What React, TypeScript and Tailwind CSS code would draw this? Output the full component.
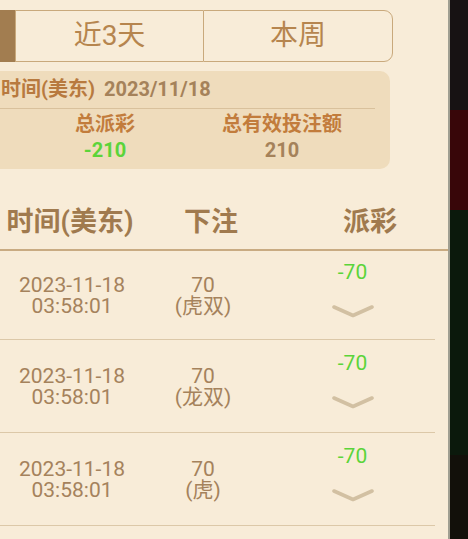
const rows = [
  { date: '2023-11-18', time: '03:58:01', bet: '70', pick: '(虎双)', payout: '-70', h: 'h-[89px]' },
  { date: '2023-11-18', time: '03:58:01', bet: '70', pick: '(龙双)', payout: '-70', h: 'h-[93px]' },
  { date: '2023-11-18', time: '03:58:01', bet: '70', pick: '(虎)', payout: '-70', h: 'h-[93px]' },
];

function Chevron() {
  return (
    <svg width="44" height="16" viewBox="0 0 44 16" className="blur-[0.4px]">
      <polyline points="3,4 22,12.5 41,4" fill="none" stroke="#d2c0a2" strokeWidth="3.6" strokeLinecap="round" strokeLinejoin="round" />
    </svg>
  );
}

export default function App() {
  return (
    <div
      className="flex h-[539px] w-[468px] overflow-hidden"
      style={{ fontFamily: 'Roboto, "Noto Sans CJK SC", sans-serif' }}
    >
      <div className="flex w-[448px] shrink-0 flex-col bg-[#f8ecd8]">
        {/* tabs */}
        <div className="mt-[10px] flex h-[52px] w-[393px]">
          <div className="w-[15px] bg-[#a27d50]" />
          <div className="flex w-[188px] items-center justify-center border-y-[1.5px] border-l-[1.5px] border-[#c9a97c] text-[28px] text-[#b6854e]">
            近3天
          </div>
          <div className="flex flex-1 items-center justify-center rounded-r-[9px] border-[1.5px] border-[#c9a97c] text-[28px] text-[#b6854e]">
            本周
          </div>
        </div>

        {/* summary */}
        <div className="mt-[9px] flex h-[98px] w-[390px] flex-col rounded-r-[10px] bg-[#efdcbc]">
          <div className="flex h-[31px] items-end gap-[9px] pl-[1px] text-[20px] font-bold leading-[26px]">
            <span className="text-[#b87a3f]">时间(美东)</span>
            <span className="text-[#a5825a]">2023/11/18</span>
          </div>
          <div className="mt-[6px] h-px w-[375px] bg-[#d9c19c]" />
          <div className="flex pt-[2px] text-[20px] font-bold leading-[26px]">
            <div className="flex w-[210px] flex-col items-center">
              <span className="text-[#c27c3c]">总派彩</span>
              <span className="text-[#5bd43a]">-210</span>
            </div>
            <div className="flex w-[144px] flex-col items-center">
              <span className="text-[#c27c3c]">总有效投注额</span>
              <span className="text-[#a5825a]">210</span>
            </div>
          </div>
        </div>

        {/* table header */}
        <div className="mt-[26px] flex h-[56px] items-center border-b-2 border-[#c9ab82] text-[27px] font-bold text-[#a07a4e]">
          <div className="w-[140px] text-center">时间(美东)</div>
          <div className="w-[142px] text-center">下注</div>
          <div className="flex-1 pl-[10px] text-center">派彩</div>
        </div>

        {/* rows */}
        {rows.map((r, i) => (
          <div key={i} className={`flex w-[435px] items-center border-b-[1.5px] border-[#dcc8a8] ${r.h}`}>
            <div className="flex w-[144px] flex-col items-center pt-[2px] text-[21px] leading-[21px] text-[#a5825c]">
              <span>{r.date}</span>
              <span>{r.time}</span>
            </div>
            <div className="flex w-[118px] flex-col items-center pt-[2px] text-[21px] leading-[21px] text-[#a5825c]">
              <span>{r.bet}</span>
              <span>{r.pick}</span>
            </div>
            <div className="flex flex-1 flex-col items-center pb-[11px] pl-[8px]">
              <span className="text-[21px] leading-[24px] text-[#5bd43a]">{r.payout}</span>
              <div className="mt-[19px]">
                <Chevron />
              </div>
            </div>
          </div>
        ))}
      </div>

      {/* background game strip */}
      <div className="flex flex-1 flex-col border-l-2 border-[#a09f92]">
        <div className="h-[110px] bg-[#171213]" />
        <div className="h-[100px] bg-[#380609]" />
        <div className="h-[245px] bg-[#0b190c]" />
        <div className="flex-1 bg-[#12100a]" />
      </div>
    </div>
  );
}
